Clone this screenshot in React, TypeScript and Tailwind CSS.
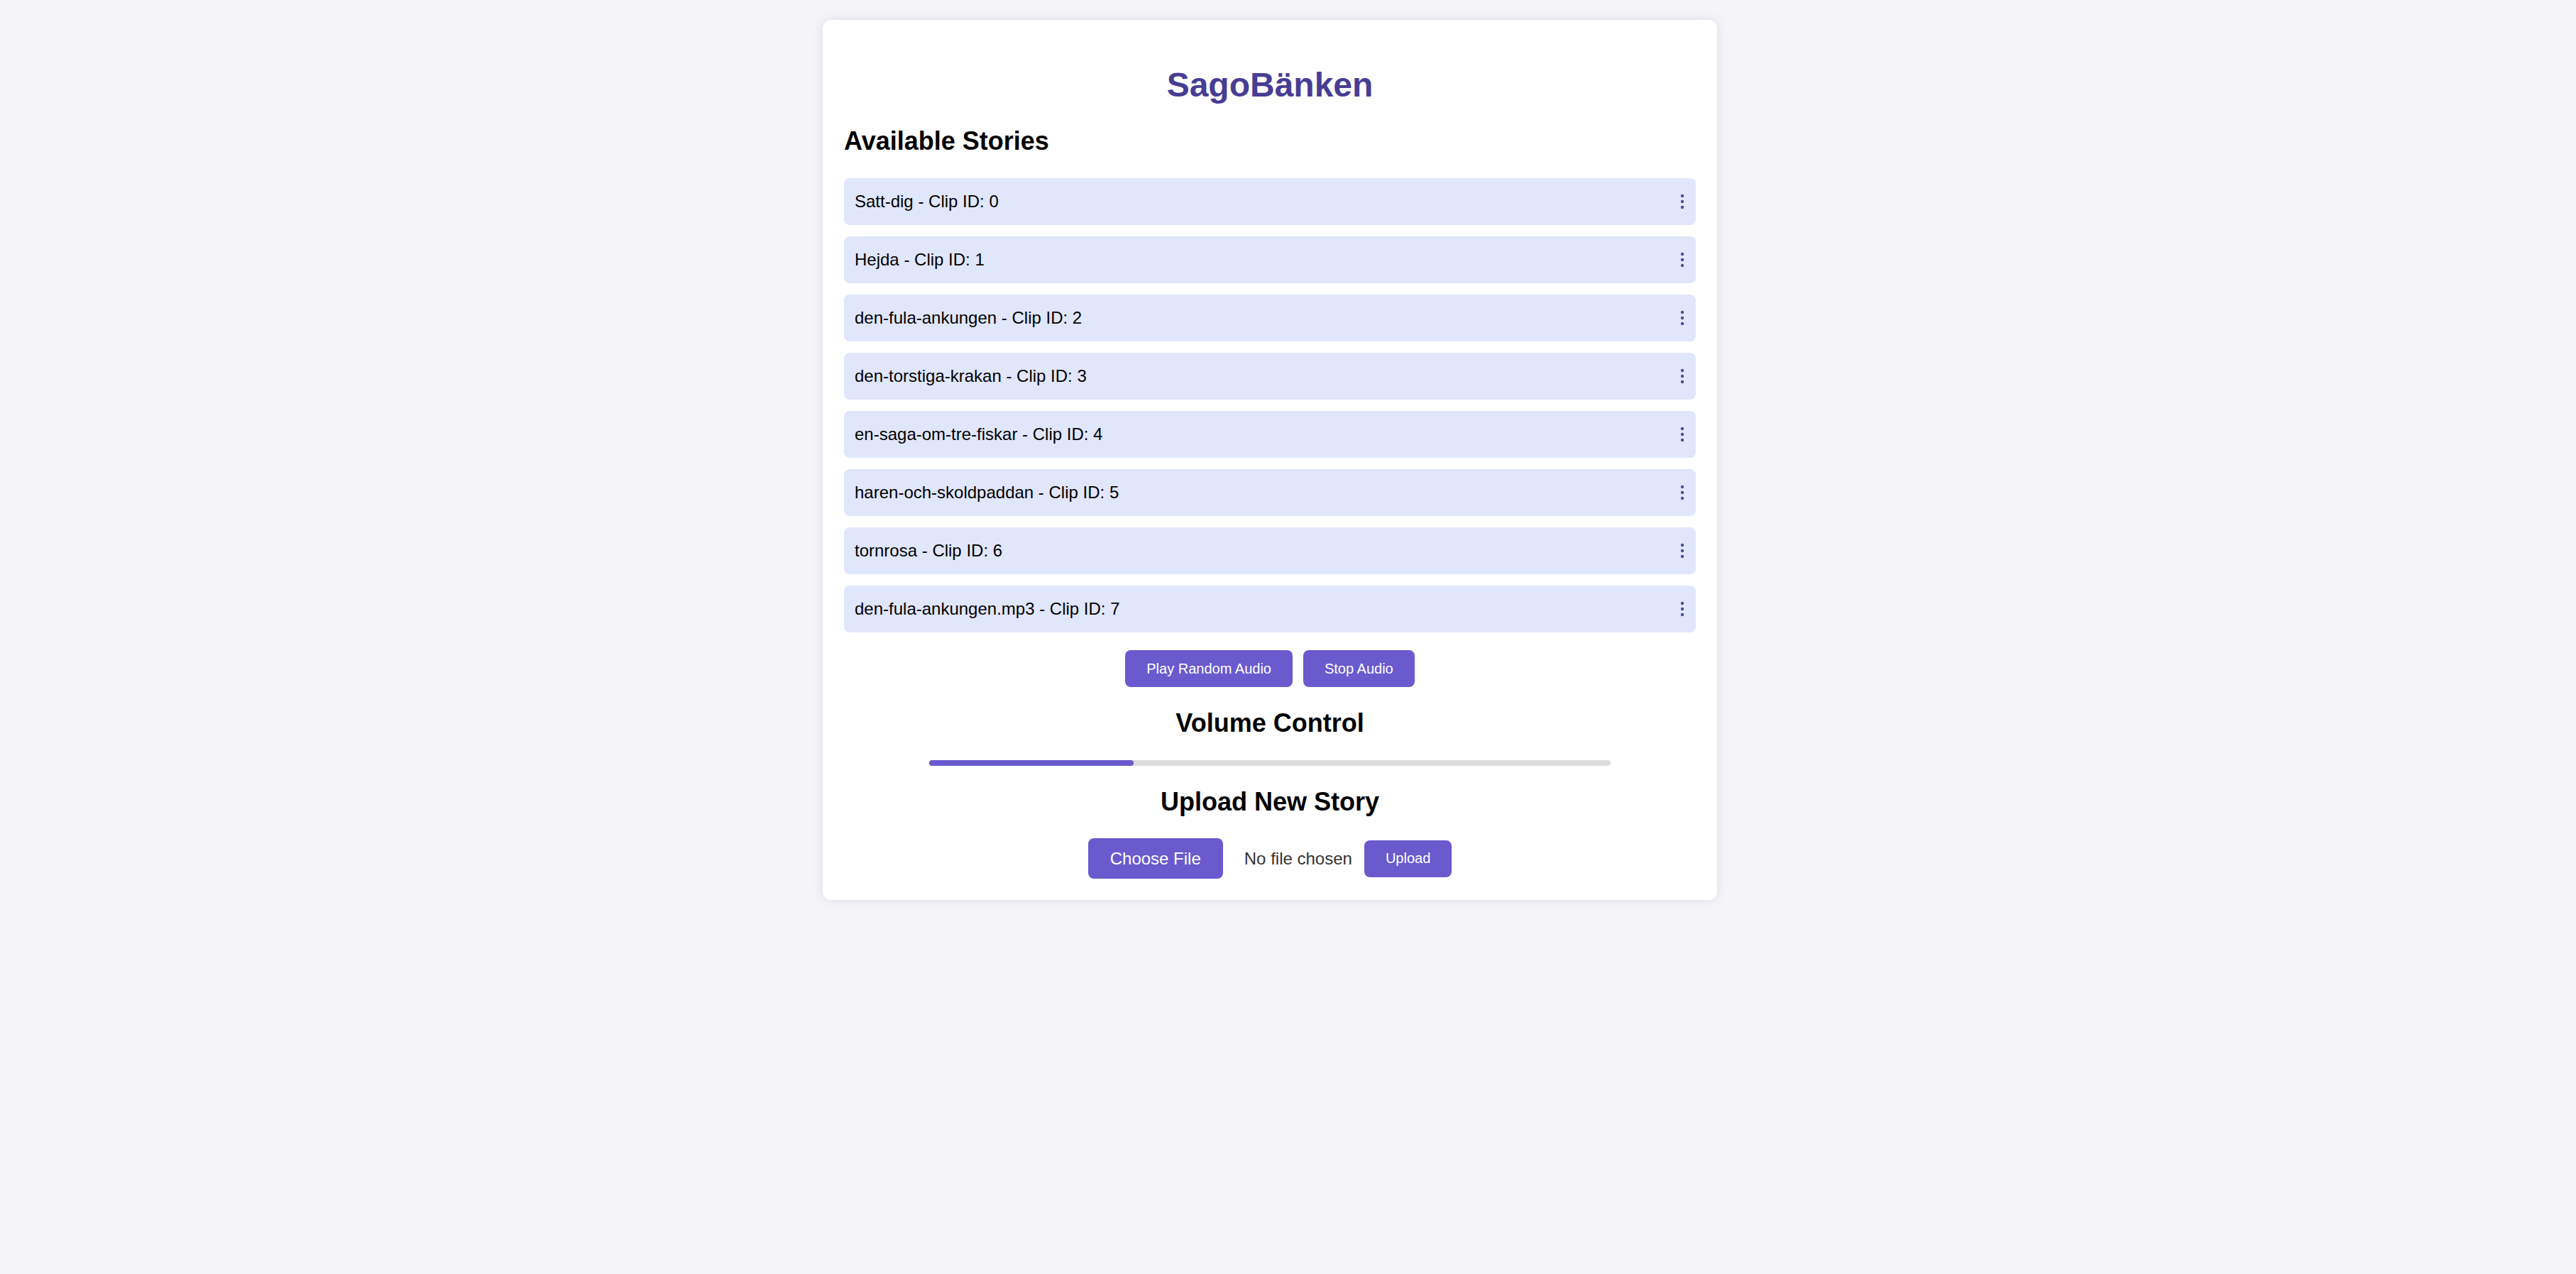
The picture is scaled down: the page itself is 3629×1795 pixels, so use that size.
const stories = [
  "Satt-dig",
  "Hejda",
  "den-fula-ankungen",
  "den-torstiga-krakan",
  "en-saga-om-tre-fiskar",
  "haren-och-skoldpaddan",
  "tornrosa",
  "den-fula-ankungen.mp3",
];

function MoreIcon() {
  return (
    <svg width="6" height="22" viewBox="0 0 6 22" fill="currentColor" aria-hidden="true">
      <circle cx="3" cy="3" r="2.2" />
      <circle cx="3" cy="11" r="2.2" />
      <circle cx="3" cy="19" r="2.2" />
    </svg>
  );
}

function StoryRow({ name, id }: { name: string; id: number }) {
  return (
    <li className="flex h-[66px] items-center justify-between rounded-[8px] bg-[#e0e6fc] pl-[15px] pr-[16px]">
      <span className="text-[24px] leading-[28px] text-black">
        {name} - Clip ID: {id}
      </span>
      <button type="button" className="flex items-center text-[#4a4f8f]" aria-label="More options">
        <MoreIcon />
      </button>
    </li>
  );
}

export default function App() {
  const volume = 30;

  return (
    <div className="min-h-screen bg-[#f4f4f9] font-['Liberation_Sans',Arial,sans-serif]">
      <div className="flex justify-center pr-[51px] pt-[28px]">
        <div className="w-[1260px] rounded-[12px] bg-white px-[30px] pb-[30px] pt-[64px] shadow-[0_0_16px_rgba(0,0,0,0.1)]">
          <h1 className="text-center text-[48px] font-bold leading-[55px] text-[#483d94]">SagoBänken</h1>

          <h2 className="mt-[31px] text-[36px] font-bold leading-[41px] text-black">Available Stories</h2>

          <ul className="mt-[32px] flex flex-col gap-[16px]">
            {stories.map((name, i) => (
              <StoryRow key={name} name={name} id={i} />
            ))}
          </ul>

          <div className="mt-[25px] flex justify-center gap-[15px]">
            <button
              type="button"
              className="h-[52px] rounded-[8px] bg-[#6a5acd] px-[30px] text-[20px] leading-[23px] text-white"
            >
              Play Random Audio
            </button>
            <button
              type="button"
              className="h-[52px] rounded-[8px] bg-[#6a5acd] px-[30px] text-[20px] leading-[23px] text-white"
            >
              Stop Audio
            </button>
          </div>

          <h2 className="mt-[30px] text-center text-[36px] font-bold leading-[41px] text-black">Volume Control</h2>

          <div className="mx-auto mt-[32px] h-[8px] w-[960px] rounded-full bg-[#dddddd]">
            <div className="h-full rounded-full bg-[#6a5acd]" style={{ width: `${volume}%` }} />
          </div>

          <h2 className="mt-[30px] text-center text-[36px] font-bold leading-[41px] text-black">Upload New Story</h2>

          <div className="mt-[31px] flex items-center justify-center">
            <button
              type="button"
              className="h-[57px] rounded-[8px] bg-[#6a5acd] px-[31px] text-[24px] leading-[28px] text-white"
            >
              Choose File
            </button>
            <span className="ml-[30px] text-[24px] leading-[28px] text-[#333333]">No file chosen</span>
            <button
              type="button"
              className="ml-[17px] h-[52px] rounded-[8px] bg-[#6a5acd] px-[30px] text-[20px] leading-[23px] text-white"
            >
              Upload
            </button>
          </div>
        </div>
      </div>
    </div>
  );
}
